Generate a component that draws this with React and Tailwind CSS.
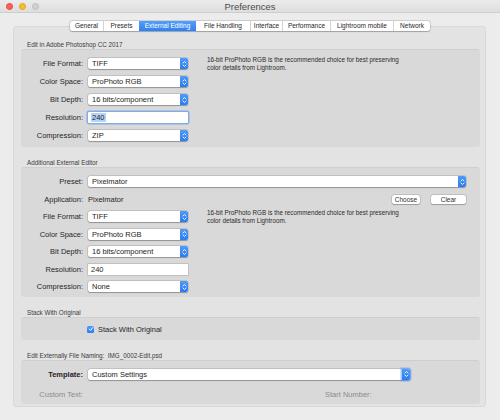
import React from "react";

function Stepper({ glow }) {
  return (
    <div className={`w-[8px] shrink-0 bg-gradient-to-b from-[#4f9bf8] to-[#2a7cf2] rounded-r-[2px] flex items-center justify-center ${glow ? "shadow-[0_0_0_1.5px_rgba(90,150,240,0.55)]" : ""}`}>
      <svg width="5" height="8" viewBox="0 0 5 8" fill="none">
        <path d="M1 3 L2.5 1.5 L4 3" stroke="white" strokeWidth="0.9" strokeLinecap="round" strokeLinejoin="round" />
        <path d="M1 5 L2.5 6.5 L4 5" stroke="white" strokeWidth="0.9" strokeLinecap="round" strokeLinejoin="round" />
      </svg>
    </div>
  );
}

function Select({ value, w, glow }) {
  return (
    <div className={`h-[11px] ${w} flex bg-white rounded-[2px] shadow-[0_0_0_0.5px_rgba(0,0,0,0.18),0_0.5px_1px_rgba(0,0,0,0.25)]`}>
      <div className="flex-1 pl-[4px] text-[7.5px] leading-[11px] text-[#1e1e1e] whitespace-nowrap">{value}</div>
      <Stepper glow={glow} />
    </div>
  );
}

function Label({ children, bold, muted }) {
  return (
    <div className={`w-[62px] shrink-0 text-right text-[7.5px] leading-[11px] whitespace-nowrap ${bold ? "font-bold text-[#222]" : muted ? "text-[#8c8c8c]" : "text-[#262626]"}`}>
      {children}
    </div>
  );
}

function Row({ label, children }) {
  return (
    <div className="h-[11px] flex items-center">
      <Label>{label}</Label>
      <div className="ml-[5px] flex items-center">{children}</div>
    </div>
  );
}

function Desc() {
  return (
    <div className="ml-[19px] text-[6.3px] leading-[8px] text-[#2a2a2a] whitespace-nowrap">
      16-bit ProPhoto RGB is the recommended choice for best preserving
      <br />
      color details from Lightroom.
    </div>
  );
}

function SectionLabel({ children, mt }) {
  return (
    <div className={`${mt} pl-[6px] h-[8px] text-[6.3px] leading-[8px] text-[#3a3a3a] whitespace-nowrap`}>{children}</div>
  );
}

function Box({ children, cls }) {
  return (
    <div className={`bg-[#d9d9d9] rounded-[3px] border-t border-[#cfcfcf] ${cls}`}>{children}</div>
  );
}

const tabs = [
  ["General", "w-[33px]"],
  ["Presets", "w-[36px]"],
  ["External Editing", "w-[57px]"],
  ["File Handling", "w-[54px]"],
  ["Interface", "w-[32px]"],
  ["Performance", "w-[48px]"],
  ["Lightroom mobile", "w-[63px]"],
  ["Network", "w-[37px]"],
];

export default function App() {
  return (
    <div className="w-[500px] h-[420px] bg-[#ececec] overflow-hidden flex flex-col font-['Liberation_Sans',Arial,sans-serif]">
      {/* title bar */}
      <div className="h-[13px] shrink-0 grid grid-cols-[1fr_auto_1fr] items-center bg-gradient-to-b from-[#ebebeb] to-[#dedede] border-b border-[#cdcdcd]">
        <div className="flex items-center gap-[6px] pl-[6px]">
          <div className="w-[7px] h-[7px] rounded-full bg-[#fc5f57] border-[0.5px] border-[#de4a43]" />
          <div className="w-[7px] h-[7px] rounded-full bg-[#fdbc2e] border-[0.5px] border-[#dea123]" />
          <div className="w-[7px] h-[7px] rounded-full bg-[#d1d1d1] border-[0.5px] border-[#bcbcbc]" />
        </div>
        <div className="text-[9.5px] leading-[13px] text-[#4b4b4b]">Preferences</div>
        <div />
      </div>

      {/* tabs */}
      <div className="mt-[8px] -mb-[5px] relative z-10 flex justify-center">
        <div className="flex h-[10px] rounded-[2px] bg-white shadow-[0_0_0_0.5px_rgba(0,0,0,0.22),0_0.5px_1px_rgba(0,0,0,0.2)] overflow-hidden">
          {tabs.map(([t, w], i) => (
            <div
              key={t}
              className={`${w} text-center text-[6.5px] leading-[10px] whitespace-nowrap ${
                t === "External Editing"
                  ? "bg-gradient-to-b from-[#559ff8] to-[#2f80f3] text-white"
                  : "text-[#262626]"
              } ${i > 0 && t !== "External Editing" && tabs[i - 1][0] !== "External Editing" ? "border-l border-[#d4d4d4]" : ""}`}
            >
              {t}
            </div>
          ))}
        </div>
      </div>

      {/* outer panel */}
      <div className="ml-[13px] mr-[14px] h-[381px] bg-[#e3e3e3] border border-[#d8d8d8] rounded-[3px] pt-[14px] pl-[7px] pr-[5px] flex flex-col">
        <SectionLabel mt="">Edit in Adobe Photoshop CC 2017</SectionLabel>
        <Box cls="h-[98px] pt-[8px] flex flex-col gap-[7px]">
          <div className="h-[11px] flex items-center">
            <Label>File Format:</Label>
            <div className="ml-[5px]"><Select value="TIFF" w="w-[100px]" /></div>
            <Desc />
          </div>
          <Row label="Color Space:"><Select value="ProPhoto RGB" w="w-[100px]" /></Row>
          <Row label="Bit Depth:"><Select value="16 bits/component" w="w-[100px]" /></Row>
          <Row label="Resolution:">
            <div className="h-[11px] w-[100px] bg-white rounded-[1px] shadow-[0_0_0_1.5px_rgba(110,160,235,0.8)] flex items-center pl-[3px]">
              <span className="bg-[#b4d3f7] text-[7.5px] leading-[9px] text-[#1e1e1e] px-[1px]">240</span>
            </div>
          </Row>
          <Row label="Compression:"><Select value="ZIP" w="w-[100px]" /></Row>
        </Box>

        <SectionLabel mt="mt-[12px]">Additional External Editor</SectionLabel>
        <Box cls="h-[130px] pt-[8px] flex flex-col gap-[6.5px]">
          <Row label="Preset:"><Select value="Pixelmator" w="w-[378px]" /></Row>
          <div className="h-[11px] flex items-center">
            <Label>Application:</Label>
            <div className="ml-[5px] text-[7.5px] leading-[11px] text-[#262626]">Pixelmator</div>
            <div className="ml-auto mr-[14px] flex gap-[11px]">
              <div className="w-[28px] h-[9px] bg-white rounded-[2px] shadow-[0_0_0_0.5px_rgba(0,0,0,0.2),0_0.5px_1px_rgba(0,0,0,0.2)] text-center text-[6.5px] leading-[9px] text-[#333]">Choose</div>
              <div className="w-[35px] h-[9px] bg-white rounded-[2px] shadow-[0_0_0_0.5px_rgba(0,0,0,0.2),0_0.5px_1px_rgba(0,0,0,0.2)] text-center text-[6.5px] leading-[9px] text-[#333]">Clear</div>
            </div>
          </div>
          <div className="h-[11px] flex items-center">
            <Label>File Format:</Label>
            <div className="ml-[5px]"><Select value="TIFF" w="w-[100px]" /></div>
            <Desc />
          </div>
          <Row label="Color Space:"><Select value="ProPhoto RGB" w="w-[100px]" /></Row>
          <Row label="Bit Depth:"><Select value="16 bits/component" w="w-[100px]" /></Row>
          <Row label="Resolution:">
            <div className="h-[11px] w-[100px] bg-white shadow-[0_0_0_0.5px_rgba(0,0,0,0.22)] text-[7.5px] leading-[11px] text-[#1e1e1e] pl-[3px]">240</div>
          </Row>
          <Row label="Compression:"><Select value="None" w="w-[100px]" /></Row>
        </Box>

        <SectionLabel mt="mt-[12px]">Stack With Original</SectionLabel>
        <Box cls="h-[23px] flex items-center">
          <div className="ml-[66px] flex items-center gap-[4px]">
            <div className="w-[7px] h-[7px] rounded-[1.5px] bg-gradient-to-b from-[#4f9bf8] to-[#2a7cf2] flex items-center justify-center">
              <svg width="6" height="6" viewBox="0 0 6 6" fill="none">
                <path d="M1.2 3.1 L2.5 4.4 L4.8 1.5" stroke="white" strokeWidth="1" strokeLinecap="round" strokeLinejoin="round" />
              </svg>
            </div>
            <div className="text-[7.5px] leading-[11px] text-[#262626] whitespace-nowrap">Stack With Original</div>
          </div>
        </Box>

        <SectionLabel mt="mt-[12px]">Edit Externally File Naming:&nbsp;&nbsp;IMG_0002-Edit.psd</SectionLabel>
        <Box cls="h-[44px] pt-[7.5px] flex flex-col">
          <div className="h-[11px] flex items-center">
            <Label bold>Template:</Label>
            <div className="ml-[5px]"><Select value="Custom Settings" w="w-[322px]" glow /></div>
          </div>
          <div className="mt-[9px] h-[11px] flex items-center">
            <Label muted>Custom Text:</Label>
            <div className="ml-[242px] text-[7.5px] leading-[11px] text-[#8c8c8c] whitespace-nowrap">Start Number:</div>
          </div>
        </Box>
      </div>
    </div>
  );
}
